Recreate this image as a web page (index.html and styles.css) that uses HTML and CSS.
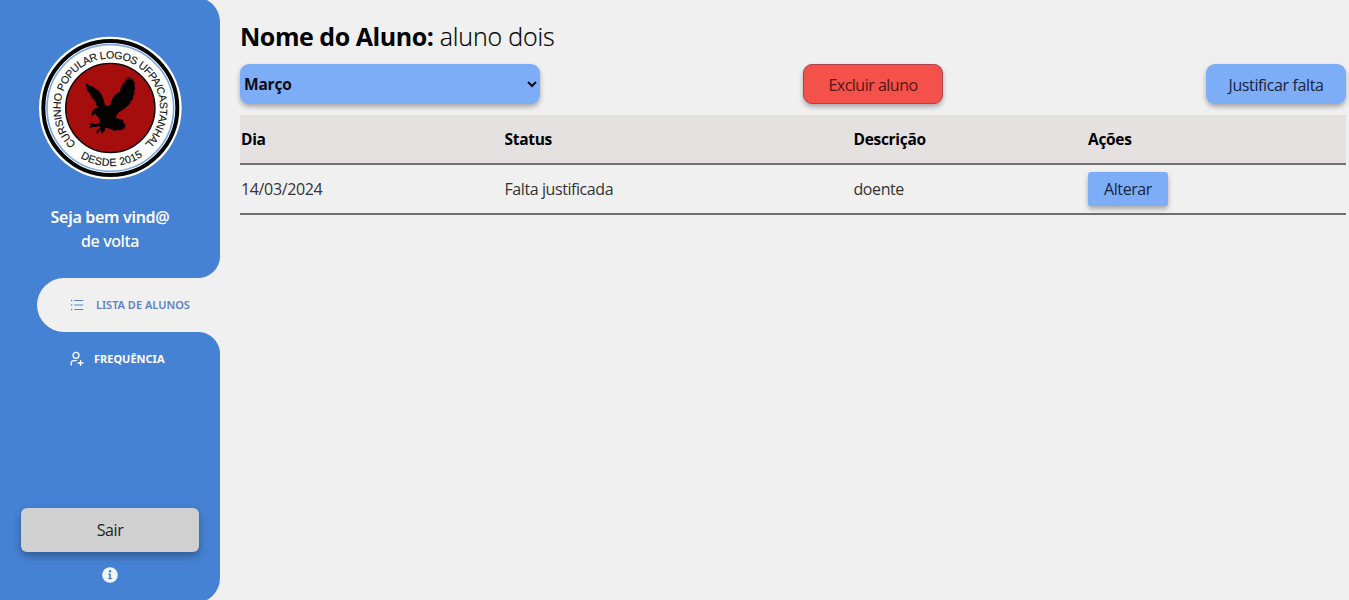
FILE: index.html
```html
<!DOCTYPE html>
<html lang="pt-BR">
<head>
<meta charset="utf-8">
<title>Lista de Alunos</title>
<link rel="stylesheet" href="styles.css">
</head>
<body>
<div class="app">
  <aside class="sidebar">
    <svg class="logo" viewBox="-93 -72 429 432" role="img" aria-label="Cursinho Popular Logos">
      <circle cx="121" cy="144" r="214" fill="#fff"/>
      <circle cx="121" cy="144" r="201" fill="none" stroke="#050505" stroke-width="12"/>
      <circle cx="121" cy="144" r="190" fill="none" stroke="#7fa9e4" stroke-width="5"/>
      <circle cx="121" cy="144" r="134" fill="#a60d0d" stroke="#100505" stroke-width="4"/>
      <path id="arc-top" fill="none" d="M18 252A149 149 0 1 1 224 252"/>
      <path id="arc-bottom" fill="none" d="M31 293A174 174 0 0 0 222 286"/>
      <text class="logo-text"><textPath href="#arc-top" textLength="709" lengthAdjust="spacing">CURSINHO POPULAR LOGOS UFPA/CASTANHAL</textPath></text>
      <text class="logo-text"><textPath href="#arc-bottom" textLength="198" lengthAdjust="spacing">DESDE 2015</textPath></text>
      <path fill="#050202" d="M46 69L54 73L60 78L70 80L78 86L88 94L96 106L102 122L105 135L115 139L122 132L127 116L136 103L150 95L153 82L158 72L160 63L163 73L168 53L171 63L174 48L178 60L182 49L184 61L190 55L191 69L196 67L193 82L196 83L192 96L194 100L188 112L190 115L182 125L180 131L172 139L162 147L152 154L144 159L140 166L137 173L148 176L158 180L163 190L167 198L162 206L153 211L143 210L134 213L121 207L111 203L105 205L104 213L99 216L96 222L92 217L95 211L89 212L84 218L80 221L79 214L84 209L92 202L86 198L77 201L68 200L62 205L57 202L64 195L57 193L63 189L74 192L84 191L91 186L88 177L82 169L77 163L71 163L65 169L66 156L71 148L78 144L86 143L79 136L77 126L70 117L62 108L59 98L51 92L50 82Z"/>
    </svg>
    <p class="welcome"><strong>Seja bem vind@</strong><span>de volta</span></p>
    <nav class="menu">
      <a class="menu-item active">
        <svg class="menu-icon" viewBox="0 0 14 14" fill="none" stroke="currentColor" stroke-width="1"><path d="M4.2 2.5H13.2M4.2 7H13.2M4.2 11.5H13.2"/><path d="M1 2.5H2.3M1 7H2.3M1 11.5H2.3" stroke-width="1.5"/></svg>
        <span class="label-list">LISTA DE ALUNOS</span>
      </a>
      <a class="menu-item">
        <svg class="menu-icon user" viewBox="0 0 14 16" fill="none" stroke="currentColor" stroke-width="1.3" stroke-linecap="round"><circle cx="6" cy="4.3" r="3"/><path d="M1.2 14V12.3Q1.2 9.6 4 9.6H6.2M10.6 9.6V14.4M8.2 12H13"/></svg>
        <span class="label-freq">FREQUÊNCIA</span>
      </a>
    </nav>
    <button class="logout">Sair</button>
    <svg class="info" viewBox="0 0 16 16"><circle cx="8" cy="8" r="7.8" fill="#f0f7ff"/><circle cx="8" cy="4.3" r="1.2" fill="#4682d3"/><path d="M6.3 6.6H8.8V11H9.8V12.2H6.3V11H7.2V7.8H6.3Z" fill="#4682d3"/></svg>
  </aside>
  <main class="content">
    <h1 class="title"><strong>Nome do Aluno:</strong> <span>aluno dois</span></h1>
    <div class="toolbar">
      <select class="month"><option>Março</option></select>
      <button class="btn danger">Excluir aluno</button>
      <button class="btn justify">Justificar falta</button>
    </div>
    <table class="absences">
      <colgroup><col class="c-day"><col class="c-status"><col class="c-desc"><col></colgroup>
      <thead><tr><th>Dia</th><th>Status</th><th>Descrição</th><th>Ações</th></tr></thead>
      <tbody><tr><td class="date">14/03/2024</td><td>Falta justificada</td><td>doente</td><td><button class="edit">Alterar</button></td></tr></tbody>
    </table>
  </main>
</div>
</body>
</html>
```
FILE: styles.css
```css
* { box-sizing: border-box; }
body {
  margin: 0;
  background: #f0f0f0;
  font-family: "Open Sans", "Noto Sans", sans-serif;
  font-size: 16px;
  color: #000;
}
button { font: inherit; padding: 0; border: 0; }
.app { display: flex; height: 600px; overflow: hidden; }

.sidebar {
  flex: none;
  display: flex;
  flex-direction: column;
  align-items: center;
  width: 220px;
  height: 606px;
  margin-top: -3px;
  padding-top: 39px;
  border-radius: 0 25px 25px 0;
  background: #4682d3;
}
.logo { width: 143px; height: 144px; margin-left: 1px; flex: none; }
.logo-text {
  font-family: "Liberation Sans", sans-serif;
  font-size: 32px;
  fill: #111;
  stroke: #111;
  stroke-width: .4px;
}
.welcome {
  display: flex;
  flex-direction: column;
  align-items: center;
  margin: 25px 0 0;
  font-family: "Noto Sans", sans-serif;
  font-size: 16px;
  line-height: 24px;
  letter-spacing: -.4px;
  color: #fff;
}
.welcome strong { font-weight: 600; letter-spacing: -.3px; }
.welcome span { font-weight: 500; }
.menu { width: 100%; padding-left: 37px; margin-top: 24.5px; }
.menu-item {
  position: relative;
  display: flex;
  align-items: center;
  height: 54px;
  padding-left: 33px;
  font-family: "Noto Sans", sans-serif;
  font-size: 11px;
  font-weight: 700;
  color: #fff;
}
.menu-item.active {
  border-radius: 27px 0 0 27px;
  background: #f0f0f0;
  color: #5c82c8;
}
.active .label-list { font-weight: 600; }
.menu-item.active::before,
.menu-item.active::after {
  content: "";
  position: absolute;
  right: 0;
  width: 22px;
  height: 22px;
}
.menu-item.active::before { top: -22px; background: radial-gradient(circle at 0 0, transparent 21.5px, #f0f0f0 22.5px); }
.menu-item.active::after { bottom: -22px; background: radial-gradient(circle at 0 100%, transparent 21.5px, #f0f0f0 22.5px); }
.menu-icon { width: 14px; height: 14px; margin-right: 12px; flex: none; }
.menu-icon.user { height: 16px; margin-right: 10px; }
.logout {
  width: 178px;
  height: 44px;
  margin-top: 122px;
  border-radius: 6px;
  background: #d0d0d0;
  box-shadow: 0 4px 9px rgba(0, 0, 0, .3);
  color: #222;
  letter-spacing: -.4px;
}
.info { width: 16px; height: 16px; margin-top: 15px; flex: none; }

.content { flex: 1; padding: 18px 3px 0 20px; }
.title { margin: 0; font-size: 25px; line-height: 37px; font-weight: 300; white-space: nowrap; letter-spacing: -.15px; -webkit-text-stroke: .2px #000; }
.title strong { font-weight: 700; letter-spacing: -.46px; -webkit-text-stroke: 0; }
.toolbar { display: flex; justify-content: space-between; margin-top: 9.4px; }
.month, .btn { height: 40px; border-radius: 9px; box-shadow: 0 3px 5px rgba(0, 0, 0, .3); }
.month {
  width: 300px;
  border: 0;
  background-color: #7eadf8;
  font: 700 15.5px "Open Sans", sans-serif;
  letter-spacing: -.2px;
  color: #0b0b16;
}
.btn { width: 140px; padding-top: 1px; background: #7eadf8; color: #172540; font-size: 16px; letter-spacing: -.38px; }
.btn.danger { border: 1px solid #aa454b; background: #f35149; color: #571515; letter-spacing: -.5px; }
.absences { width: 100%; margin-top: 10.4px; table-layout: fixed; border-collapse: separate; border-spacing: 0; font-size: 16px; }
.c-day { width: 263.5px; }
.c-status { width: 349px; }
.c-desc { width: 234.5px; }
.absences th, .absences td { height: 50px; padding: 0 1px; border-bottom: 2px solid #707070; text-align: left; vertical-align: middle; }
.absences th { background: #e6e1e1; font-size: 15.5px; font-weight: 700; letter-spacing: -.3px; }
.absences td { padding-top: 1px; color: #333; letter-spacing: -.42px; }
.absences .date { letter-spacing: -.35px; }
.edit {
  display: block;
  width: 80px;
  height: 34px;
  border-radius: 3px;
  background: #7eadf8;
  box-shadow: 0 3px 5px rgba(0, 0, 0, .3);
  color: #172540;
  letter-spacing: -.4px;
}
```
